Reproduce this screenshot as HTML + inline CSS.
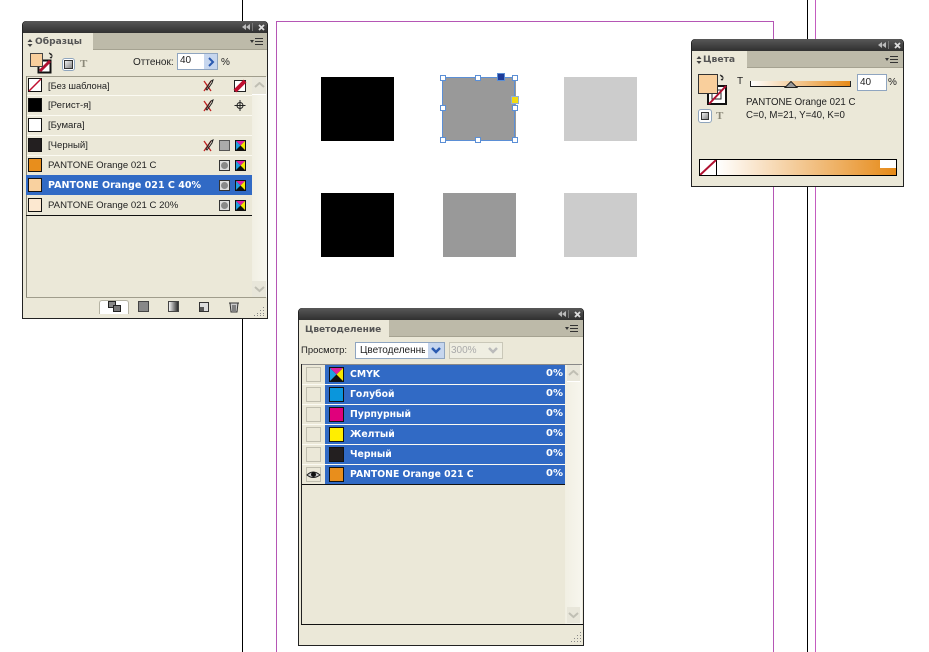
<!DOCTYPE html>
<html><head><meta charset="utf-8"><style>
html,body{margin:0;padding:0;background:#fff}
#r{position:relative;width:929px;height:652px;overflow:hidden;background:#fff;font-family:"Liberation Sans","Noto Sans CJK SC",sans-serif;font-size:9.6px;color:#222}
#r div,#r svg,#r span{position:absolute;box-sizing:border-box}
.p{background:#ebe8d8;border:1px solid #222;border-top-left-radius:4px;border-top-right-radius:4px}
.t{white-space:nowrap;line-height:12px}
.b{font-family:"DejaVu Sans",sans-serif;font-weight:bold;font-size:9.3px}
.sw{width:14px;height:14px;border:1px solid #111}
.sep{height:1px;background:#fbfaf2}
.bar{background:linear-gradient(#585858,#303030);left:0;right:0;top:-1px;height:12px;border-top-left-radius:4px;border-top-right-radius:4px}
.tabrow{background:#bdbaa9;left:0;right:0;top:11px;height:17px;border-bottom:1px solid #a5a291}
.tab{background:#ebe8d8;top:11px;left:0;height:18px}
.tt{color:#555;font-size:9.2px}
</style></head><body><div id="r">
<!-- page lines -->
<div style="left:242px;top:0;width:1px;height:652px;background:#000"></div>
<div style="left:807px;top:0;width:1px;height:652px;background:#000"></div>
<div style="left:815px;top:0;width:1px;height:652px;background:#c45cc0"></div>
<div style="left:276px;top:21px;width:498px;height:640px;border:1px solid #b556b5"></div>
<!-- squares -->
<div style="left:321px;top:77px;width:73px;height:64px;background:#000"></div>
<div style="left:443px;top:77px;width:73px;height:64px;background:#999"></div>
<div style="left:564px;top:77px;width:73px;height:64px;background:#ccc"></div>
<div style="left:321px;top:193px;width:73px;height:64px;background:#000"></div>
<div style="left:443px;top:193px;width:73px;height:64px;background:#999"></div>
<div style="left:564px;top:193px;width:73px;height:64px;background:#ccc"></div>
<svg style="left:436px;top:70px" width="90" height="76">
<rect x="6.500" y="7.500" width="72" height="63" fill="none" stroke="#5b8fd6"/>
<g fill="#fff" stroke="#5b8fd6"><rect x="4.500" y="5.500" width="5" height="5"/><rect x="39.500" y="5.500" width="5" height="5"/><rect x="76.500" y="5.500" width="5" height="5"/><rect x="4.500" y="35.500" width="5" height="5"/><rect x="76.500" y="35.500" width="5" height="5"/><rect x="4.500" y="67.500" width="5" height="5"/><rect x="39.500" y="67.500" width="5" height="5"/><rect x="76.500" y="67.500" width="5" height="5"/></g>
<rect x="61.500" y="3.500" width="7" height="7" fill="#1f3c98" stroke="#5b8fd6"/><rect x="75.500" y="26.500" width="7" height="7" fill="#f2dc10" stroke="#8fb0d8"/>
</svg>

<!-- Panel: swatches -->
<div class="p" style="left:22px;top:21px;width:246px;height:298px">
<div class="bar"></div>
<svg style="left:219px;top:2px" width="9" height="7"><path d="M4 0v6L0 3zM8 0v6L4 3z" fill="#bbb"/></svg>
<div style="left:229px;top:1px;width:1px;height:8px;background:#777"></div>
<svg style="left:235px;top:2px" width="7" height="7"><path d="M1 1l5 5M6 1l-5 5" stroke="#ddd" stroke-width="1.800"/></svg>
<div class="tabrow"></div><div class="tab" style="width:70px"></div>
<svg style="left:4px;top:17px" width="6" height="8"><path d="M3 0l2.500 3h-5zM3 8l2.500-3h-5z" fill="#444"/></svg>
<div class="t b tt" style="left:12px;top:14px;font-size:9.100px">Образцы</div>
<svg style="left:227px;top:15px" width="14" height="10"><path d="M0 3h4L2 6z" fill="#333"/><path d="M5 1.500h8M5 4.500h8M5 7.500h8" stroke="#333"/></svg>
<!-- fill/stroke -->
<svg style="left:6px;top:30px" width="26" height="26"><path d="M20 1l2 1-1 1M22 2q2 2 0 4M21 5l1 1 1-1" stroke="#222" fill="none"/><rect x="9.500" y="8.500" width="12" height="12" fill="#fff" stroke="#111" stroke-width="2"/><rect x="12" y="11" width="7" height="7" fill="#fff"/><path d="M11 19L21 9" stroke="#b01030" stroke-width="3"/><rect x="1.500" y="1.500" width="12" height="13" fill="#f9cf9c" stroke="#444"/></svg>
<div style="left:39px;top:36px;width:13px;height:13px;border:1px solid #8fa5bd;border-radius:3px;background:#fff"></div>
<div style="left:41px;top:38px;width:9px;height:9px;border:1px solid #333;background:linear-gradient(135deg,#eee,#888)"></div>
<div class="t" style="left:57px;top:36px;font:bold 11px 'Liberation Serif',serif;color:#8a8878">T</div>
<div class="t" style="left:110px;top:35px;font-size:10px">Оттенок:</div>
<div style="left:154px;top:31px;width:41px;height:17px;background:#fff;border:1px solid #8fa5c0"></div>
<div style="left:181px;top:32px;width:13px;height:15px;background:#c6d6ee"></div>
<div class="t" style="left:157px;top:33px;font-size:10px">40</div>
<svg style="left:184px;top:35px" width="8" height="10"><path d="M2 1l4 4-4 4" stroke="#2a5ab0" stroke-width="2" fill="none"/></svg>
<div class="t" style="left:198px;top:35px;font-size:10px">%</div>
<!-- list -->
<div style="left:3px;top:54px;width:240px;height:1px;background:#a09d8c"></div>
<div style="left:3px;top:54px;width:1px;height:222px;background:#8a8878"></div>
<div style="left:3px;top:275px;width:240px;height:1px;background:#a09d8c"></div>
<div class="sep" style="left:4px;width:225px;top:73px"></div><div class="sep" style="left:4px;width:225px;top:93px"></div><div class="sep" style="left:4px;width:225px;top:113px"></div><div class="sep" style="left:4px;width:225px;top:133px"></div>
<div style="left:3px;top:153px;width:226px;height:20px;background:#316ac5"></div>
<div style="left:3px;top:193px;width:226px;height:1px;background:#111"></div>
<div style="left:229px;top:55px;width:15px;height:220px;background:linear-gradient(90deg,#f1efe3,#f7f6ee)"></div>
<div style="left:229px;top:55px;width:14px;height:18px;background:#e8e6da;border-bottom:1px solid #fff"></div>
<svg style="left:231px;top:60px" width="11" height="7"><path d="M1 5l4.500-4 4.500 4" stroke="#c0bfb4" stroke-width="2" fill="none"/></svg>
<div style="left:229px;top:259px;width:14px;height:16px;background:#e8e6da"></div>
<svg style="left:231px;top:264px" width="11" height="7"><path d="M1 1l4.500 4 4.500-4" stroke="#c0bfb4" stroke-width="2" fill="none"/></svg>
<svg style="left:5px;top:56px" width="14" height="14"><rect x=".5" y=".5" width="13" height="13" fill="#fff" stroke="#111"/><path d="M1 13L13 1" stroke="#c01030" stroke-width="1.500"/></svg>
<div class="sw" style="left:5px;top:76px;background:#000"></div>
<div class="sw" style="left:5px;top:96px;background:#fff"></div>
<div class="sw" style="left:5px;top:116px;background:#231f20"></div>
<div class="sw" style="left:5px;top:136px;background:#e88e1c"></div>
<div class="sw" style="left:5px;top:156px;background:#f9d19f"></div>
<div class="sw" style="left:5px;top:176px;background:#fce8d0"></div>
<div class="t" style="left:25px;top:58px;font-size:9.300px">[Без шаблона]</div>
<div class="t" style="left:25px;top:78px">[Регист-я]</div>
<div class="t" style="left:25px;top:98px">[Бумага]</div>
<div class="t" style="left:25px;top:118px">[Черный]</div>
<div class="t" style="left:25px;top:138px">PANTONE Orange 021 C</div>
<div class="t b" style="left:25px;top:158px;color:#fff;font-size:9.550px">PANTONE Orange 021 C 40%</div>
<div class="t" style="left:25px;top:178px">PANTONE Orange 021 C 20%</div>
<svg style="left:0;top:54px" width="244" height="190">
<g transform="translate(6,0)"><path d="M175 5l7 10M182 5l-7 10" stroke="#c02020" stroke-width="1.300" fill="none"/><path d="M177 13l5-8 2-1-1 3-5 7z" fill="none" stroke="#222"/></g>
<g transform="translate(6,20)"><path d="M175 5l7 10M182 5l-7 10" stroke="#c02020" stroke-width="1.300" fill="none"/><path d="M177 13l5-8 2-1-1 3-5 7z" fill="none" stroke="#222"/></g>
<g transform="translate(6,60)"><path d="M175 5l7 10M182 5l-7 10" stroke="#c02020" stroke-width="1.300" fill="none"/><path d="M177 13l5-8 2-1-1 3-5 7z" fill="none" stroke="#222"/></g>
<rect x="211.500" y="4.500" width="11" height="11" fill="#fff" stroke="#222"/><path d="M212 15L222 5" stroke="#c01030" stroke-width="4"/>
<circle cx="217" cy="29.500" r="3" fill="none" stroke="#222"/><path d="M217 24v11M211.500 29.500h11" stroke="#222"/>
<rect x="196.500" y="64.500" width="10" height="10" fill="#aaa" stroke="#555"/>
<g transform="translate(212,64)"><rect width="11" height="11" fill="#111"/><path d="M1 1h9L5.500 5.500z" fill="#e020a0"/><path d="M1 1v9L5.500 5.500z" fill="#20a0e0"/><path d="M10 1v9L5.500 5.500z" fill="#f5e800"/></g>
<g transform="translate(212,84)"><rect width="11" height="11" fill="#111"/><path d="M1 1h9L5.500 5.500z" fill="#e020a0"/><path d="M1 1v9L5.500 5.500z" fill="#20a0e0"/><path d="M10 1v9L5.500 5.500z" fill="#f5e800"/></g>
<g transform="translate(212,104)"><rect width="11" height="11" fill="#111"/><path d="M1 1h9L5.500 5.500z" fill="#e020a0"/><path d="M1 1v9L5.500 5.500z" fill="#20a0e0"/><path d="M10 1v9L5.500 5.500z" fill="#f5e800"/></g>
<g transform="translate(212,124)"><rect width="11" height="11" fill="#111"/><path d="M1 1h9L5.500 5.500z" fill="#e020a0"/><path d="M1 1v9L5.500 5.500z" fill="#20a0e0"/><path d="M10 1v9L5.500 5.500z" fill="#f5e800"/></g>
<g transform="translate(196,84)"><rect x=".5" y=".5" width="10" height="10" fill="#ddd" stroke="#333"/><circle cx="5.500" cy="5.500" r="3.500" fill="#888"/></g>
<g transform="translate(196,104)"><rect x=".5" y=".5" width="10" height="10" fill="#ddd" stroke="#333"/><circle cx="5.500" cy="5.500" r="3.500" fill="#888"/></g>
<g transform="translate(196,124)"><rect x=".5" y=".5" width="10" height="10" fill="#ddd" stroke="#333"/><circle cx="5.500" cy="5.500" r="3.500" fill="#888"/></g>
</svg>
<!-- bottom bar -->
<div style="left:76px;top:278px;width:30px;height:14px;background:#fff;border:1px solid #b5b3a3;border-radius:3px 3px 0 0;border-bottom:0"></div>
<svg style="left:80px;top:278px" width="165" height="16">
<rect x="5.500" y="1.500" width="7" height="6" fill="#888" stroke="#222"/><rect x="10.500" y="5.500" width="7" height="6" fill="#777" stroke="#222"/>
<rect x="35.500" y="1.500" width="10" height="10" fill="#888" stroke="#444"/>
<defs><linearGradient id="g"><stop offset="0" stop-color="#fff"/><stop offset="1" stop-color="#222"/></linearGradient></defs>
<rect x="65.500" y="1.500" width="10" height="10" fill="url(#g)" stroke="#444"/>
<rect x="96.500" y="2.500" width="9" height="9" fill="#ddd" stroke="#333"/><rect x="97" y="7" width="4" height="4" fill="#555"/>
<path d="M126 3h10M127 3l1 9h6l1-9M130 5v6M132 5v6" stroke="#333" fill="#ccc"/>
</svg>
<svg style="left:231px;top:284px" width="12" height="12"><g fill="#888"><rect x="9" y="1" width="1" height="1"/><rect x="9" y="4" width="1" height="1"/><rect x="6" y="4" width="1" height="1"/><rect x="9" y="7" width="1" height="1"/><rect x="6" y="7" width="1" height="1"/><rect x="3" y="7" width="1" height="1"/><rect x="9" y="9" width="1" height="1"/><rect x="6" y="9" width="1" height="1"/><rect x="3" y="9" width="1" height="1"/><rect x="0" y="9" width="1" height="1"/></g></svg>
</div>

<!-- Panel: colors -->
<div class="p" style="left:691px;top:39px;width:213px;height:148px">
<div class="bar"></div>
<svg style="left:186px;top:2px" width="9" height="7"><path d="M4 0v6L0 3zM8 0v6L4 3z" fill="#bbb"/></svg>
<div style="left:196px;top:1px;width:1px;height:8px;background:#777"></div>
<svg style="left:202px;top:2px" width="7" height="7"><path d="M1 1l5 5M6 1l-5 5" stroke="#ddd" stroke-width="1.800"/></svg>
<div class="tabrow"></div><div class="tab" style="width:55px"></div>
<svg style="left:4px;top:16px" width="6" height="8"><path d="M3 0l2.500 3h-5zM3 8l2.500-3h-5z" fill="#444"/></svg>
<div class="t b tt" style="left:11px;top:14px">Цвета</div>
<svg style="left:193px;top:15px" width="14" height="10"><path d="M0 3h4L2 6z" fill="#333"/><path d="M5 1.500h8M5 4.500h8M5 7.500h8" stroke="#333"/></svg>
<svg style="left:6px;top:34px" width="30" height="34"><path d="M22 1l2 1-1 1M24 2q2 2 0 4M23 5l1 1 1-1" stroke="#222" fill="none"/><rect x="10" y="12" width="18" height="18" fill="#fff" stroke="#111" stroke-width="2"/><rect x="14" y="16" width="9" height="9" fill="#fff" stroke="#222"/><path d="M11 30L28 12" stroke="#b01030" stroke-width="2"/><rect x=".5" y=".5" width="19" height="19" fill="#f9cf9c" stroke="#333"/></svg>
<div style="left:6px;top:69px;width:14px;height:14px;border:1px solid #8fa5bd;border-radius:3px;background:#fff"></div>
<div style="left:9px;top:72px;width:8px;height:8px;border:1px solid #333;background:linear-gradient(135deg,#eee,#888)"></div>
<div class="t" style="left:24px;top:70px;font:bold 11px 'Liberation Serif',serif;color:#8a8878">T</div>
<div class="t" style="left:45px;top:36px;font-size:10px">T</div>
<div style="left:58px;top:41px;width:101px;height:6px;background:linear-gradient(90deg,#fff,#e68a18);border-bottom:1px solid #222;border-right:1px solid #222;border-left:1px solid #222"></div>
<svg style="left:92px;top:41px" width="14" height="7"><path d="M1 6.500L7 .5l6 6z" fill="#999" stroke="#222"/></svg>
<div style="left:165px;top:34px;width:30px;height:17px;background:#fff;border:1px solid #8fa5c0"></div>
<div class="t" style="left:168px;top:37px;font-size:10px">40</div>
<div class="t" style="left:196px;top:37px;font-size:10px">%</div>
<div class="t" style="left:54px;top:57px;font-size:9.700px">PANTONE Orange 021 C</div>
<div class="t" style="left:54px;top:70px;font-size:9.700px">C=0, M=21, Y=40, K=0</div>
<div style="left:7px;top:119px;width:198px;height:17px;background:#000"></div>
<div style="left:8px;top:120px;width:16px;height:15px;background:#fff"></div>
<svg style="left:8px;top:120px" width="17" height="15"><path d="M0 15L16 0" stroke="#b01030" stroke-width="2"/></svg>
<div style="left:25px;top:120px;width:179px;height:15px;background:linear-gradient(90deg,#fff,#e68a18)"></div>
<div style="left:188px;top:120px;width:16px;height:8px;background:#fff"></div>
</div>

<!-- Panel: separations -->
<div class="p" style="left:298px;top:308px;width:286px;height:338px">
<div class="bar"></div>
<svg style="left:259px;top:2px" width="9" height="7"><path d="M4 0v6L0 3zM8 0v6L4 3z" fill="#bbb"/></svg>
<div style="left:269px;top:1px;width:1px;height:8px;background:#777"></div>
<svg style="left:275px;top:2px" width="7" height="7"><path d="M1 1l5 5M6 1l-5 5" stroke="#ddd" stroke-width="1.800"/></svg>
<div class="tabrow"></div><div class="tab" style="width:90px"></div>
<div class="t b tt" style="left:6px;top:15px;font-size:9px">Цветоделение</div>
<svg style="left:266px;top:15px" width="14" height="10"><path d="M0 3h4L2 6z" fill="#333"/><path d="M5 1.500h8M5 4.500h8M5 7.500h8" stroke="#333"/></svg>
<div class="t" style="left:2px;top:36px;font-size:9.500px">Просмотр:</div>
<div style="left:56px;top:33px;width:90px;height:17px;background:#fff;border:1px solid #8fa5c0;overflow:hidden"></div>
<div class="t" style="left:61px;top:36px;width:65px;overflow:hidden;font-size:10px">Цветоделенный</div>
<div style="left:129px;top:34px;width:16px;height:15px;background:#c6d6ee"></div>
<svg style="left:131px;top:38px" width="12" height="8"><path d="M2 1l4 4 4-4" stroke="#2a5ab0" stroke-width="2.500" fill="none"/></svg>
<div style="left:150px;top:33px;width:54px;height:17px;background:#efeee2;border:1px solid #c9c7b8"></div>
<div class="t" style="left:152px;top:36px;color:#aaa;font-size:10px">300%</div>
<svg style="left:188px;top:38px" width="12" height="8"><path d="M2 1l4 4 4-4" stroke="#bbb" stroke-width="2.500" fill="none"/></svg>
<!-- list -->
<div style="left:2px;top:55px;width:281px;height:1px;background:#888"></div>
<div style="left:2px;top:55px;width:1px;height:261px;background:#222"></div>
<div style="left:2px;top:315px;width:282px;height:1px;background:#111"></div>
<div style="left:26px;top:56px;width:240px;height:119px;background:#316ac5"></div>
<div class="sep" style="left:3px;width:263px;top:75px"></div><div class="sep" style="left:3px;width:263px;top:95px"></div><div class="sep" style="left:3px;width:263px;top:115px"></div><div class="sep" style="left:3px;width:263px;top:135px"></div><div class="sep" style="left:3px;width:263px;top:155px"></div>
<div style="left:3px;top:175px;width:263px;height:1px;background:#111"></div>
<div style="left:266px;top:56px;width:17px;height:259px;background:linear-gradient(90deg,#f1efe3,#f7f6ee)"></div>
<div style="left:268px;top:56px;width:13px;height:17px;background:#e8e6da;border-bottom:1px solid #fff"></div>
<svg style="left:269px;top:61px" width="11" height="7"><path d="M1 5l4.500-4 4.500 4" stroke="#c0bfb4" stroke-width="2" fill="none"/></svg>
<div style="left:268px;top:298px;width:13px;height:16px;background:#e8e6da"></div>
<svg style="left:269px;top:303px" width="11" height="7"><path d="M1 1l4.500 4 4.500-4" stroke="#c0bfb4" stroke-width="2" fill="none"/></svg>
<div style="left:7px;top:58px;width:15px;height:15px;border:1px solid #c0beaf"></div>
<div style="left:7px;top:78px;width:15px;height:15px;border:1px solid #c0beaf"></div>
<div style="left:7px;top:98px;width:15px;height:15px;border:1px solid #c0beaf"></div>
<div style="left:7px;top:118px;width:15px;height:15px;border:1px solid #c0beaf"></div>
<div style="left:7px;top:138px;width:15px;height:15px;border:1px solid #c0beaf"></div>
<div style="left:7px;top:158px;width:15px;height:15px;border:1px solid #c0beaf"></div>
<svg style="left:7px;top:160px" width="15" height="12"><path d="M1 6Q7 0 14 6Q7 11 1 6z" fill="#ccc" stroke="#222"/><circle cx="7.500" cy="5.500" r="2.500" fill="#111"/></svg>
<svg style="left:30px;top:58px" width="15" height="15"><rect width="15" height="15" fill="#111"/><path d="M1 1h13L7.500 7.500z" fill="#e020a0"/><path d="M1 1v13L7.500 7.500z" fill="#20a0e0"/><path d="M14 1v13L7.500 7.500z" fill="#f5e800"/></svg>
<div class="sw" style="left:30px;top:78px;width:15px;height:15px;background:#0a96dc"></div>
<div class="sw" style="left:30px;top:98px;width:15px;height:15px;background:#e0007c"></div>
<div class="sw" style="left:30px;top:118px;width:15px;height:15px;background:#ffee00"></div>
<div class="sw" style="left:30px;top:138px;width:15px;height:15px;background:#231f20"></div>
<div class="sw" style="left:30px;top:158px;width:15px;height:15px;background:#e88e1c"></div>
<div class="t b" style="left:51px;top:60px;color:#fff">CMYK</div>
<div class="t b" style="left:51px;top:80px;color:#fff">Голубой</div>
<div class="t b" style="left:51px;top:100px;color:#fff">Пурпурный</div>
<div class="t b" style="left:51px;top:120px;color:#fff">Желтый</div>
<div class="t b" style="left:51px;top:140px;color:#fff">Черный</div>
<div class="t b" style="left:51px;top:160px;color:#fff">PANTONE Orange 021 C</div>
<div class="t b" style="left:247px;top:59px;color:#fff;font-size:10px">0%</div>
<div class="t b" style="left:247px;top:79px;color:#fff;font-size:10px">0%</div>
<div class="t b" style="left:247px;top:99px;color:#fff;font-size:10px">0%</div>
<div class="t b" style="left:247px;top:119px;color:#fff;font-size:10px">0%</div>
<div class="t b" style="left:247px;top:139px;color:#fff;font-size:10px">0%</div>
<div class="t b" style="left:247px;top:159px;color:#fff;font-size:10px">0%</div>
<svg style="left:272px;top:323px" width="12" height="12"><g fill="#888"><rect x="9" y="0" width="1" height="1"/><rect x="9" y="3" width="1" height="1"/><rect x="6" y="3" width="1" height="1"/><rect x="9" y="6" width="1" height="1"/><rect x="6" y="6" width="1" height="1"/><rect x="3" y="6" width="1" height="1"/><rect x="9" y="9" width="1" height="1"/><rect x="6" y="9" width="1" height="1"/><rect x="3" y="9" width="1" height="1"/><rect x="0" y="9" width="1" height="1"/></g></svg>
</div>
</div></body></html>
